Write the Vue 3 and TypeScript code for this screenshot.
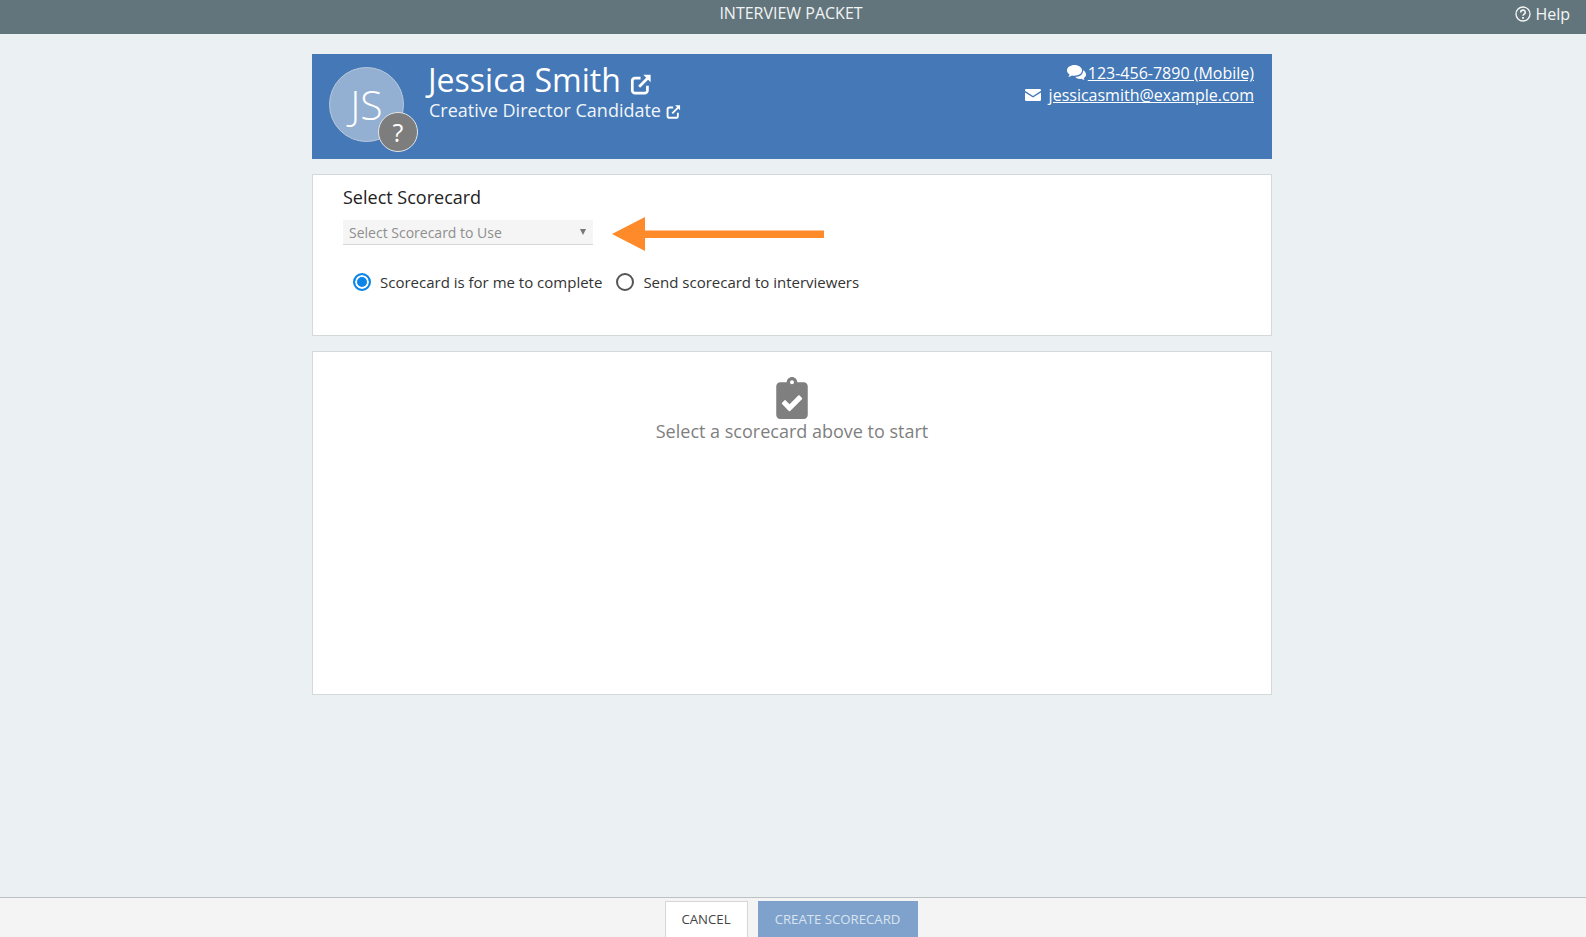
<template>
  <div class="page">
    <header class="topbar">
      <span></span>
      <span class="topbar-title">INTERVIEW PACKET</span>
      <a class="help">
        <svg class="help-icon" viewBox="0 0 24 24" fill="none" stroke="currentColor" stroke-width="2">
          <circle cx="12" cy="12" r="10.5" />
          <path d="M8.6 9.6a3.4 3.4 0 0 1 6.8 0c0 2.4-3.4 2.6-3.4 5" stroke-width="2.4" />
          <path d="M12 16.4v2.6" stroke-width="2.8" />
        </svg>
        Help
      </a>
    </header>

    <main class="content">
      <section class="candidate">
        <div class="avatar">
          JS
          <span class="avatar-badge">?</span>
        </div>
        <div class="candidate-info">
          <h1 class="candidate-name">
            Jessica Smith
            <svg class="ext-icon" viewBox="0 0 24 24">
              <path class="ext-box" d="M11.5 5.5H5.500A3 3 0 0 0 2.500 8.500v10.500a3 3 0 0 0 3 3h10.500a3 3 0 0 0 3-3V14" />
              <path class="ext-shaft" d="M10 15L20 5" />
              <path class="ext-head" d="M14.500 2h8v8z" />
            </svg>
          </h1>
          <p class="candidate-role">
            Creative Director Candidate
            <svg class="ext-icon small" viewBox="0 0 24 24">
              <path class="ext-box" d="M11.5 5.5H5.500A3 3 0 0 0 2.500 8.500v10.500a3 3 0 0 0 3 3h10.500a3 3 0 0 0 3-3V14" />
              <path class="ext-shaft" d="M10 15L20 5" />
              <path class="ext-head" d="M14.500 2h8v8z" />
            </svg>
          </p>
        </div>
        <div class="candidate-contact">
          <div class="contact-row">
            <svg class="contact-icon comments" viewBox="0 0 24 20" fill="currentColor">
              <path d="M9.500 0C4.300 0 0 3 0 6.800c0 2.100 1.300 3.900 3.300 5.200-.3 1-.9 1.900-1.800 2.800 1.800-.2 3.400-.9 4.700-1.800 1 .2 2.100.4 3.300.4 5.200 0 9.500-3 9.500-6.600S14.700 0 9.500 0z" />
              <path d="M20.300 6.300c.1.300.1.600.1.900 0 4.400-4.500 7.700-10 7.900 1.300 1.500 3.500 2.400 6 2.400.8 0 1.500-.1 2.200-.3 1 .9 2.300 1.500 3.700 1.700-.6-.7-1.100-1.500-1.300-2.300 1.800-1 3-2.600 3-4.400 0-2.400-1.600-4.600-3.700-5.900z" />
            </svg>
            <a class="contact-link">123-456-7890 (Mobile)</a>
          </div>
          <div class="contact-row">
            <svg class="contact-icon envelope" viewBox="0 0 24 18" fill="currentColor">
              <path d="M2 0h20a2 2 0 0 1 2 2v.8L12 10.400 0 2.800V2a2 2 0 0 1 2-2z" />
              <path d="M0 5.300l12 7.600 12-7.600V16a2 2 0 0 1-2 2H2a2 2 0 0 1-2-2z" />
            </svg>
            <a class="contact-link">jessicasmith@example.com</a>
          </div>
        </div>
      </section>

      <section class="card select-card">
        <h2 class="select-title">Select Scorecard</h2>
        <div class="select-row">
          <div class="select-box">
            <span>Select Scorecard to Use</span>
            <span class="select-caret"></span>
          </div>
          <svg class="arrow" viewBox="0 0 212 34">
            <path d="M33 0v13.500h179v7.500H33v13L0 17z" />
          </svg>
        </div>
        <div class="radios">
          <label v-for="option in options" :key="option.label" class="radio">
            <span class="radio-mark" :class="{ checked: option.checked }"></span>
            {{ option.label }}
          </label>
        </div>
      </section>

      <section class="card empty-card">
        <svg class="clipboard" viewBox="0 0 384 512" fill="currentColor">
          <path d="M336 64h-80c0-35.300-28.700-64-64-64s-64 28.700-64 64H48C21.500 64 0 85.500 0 112v352c0 26.500 21.500 48 48 48h288c26.500 0 48-21.500 48-48V112c0-26.500-21.500-48-48-48zM192 40c13.300 0 24 10.700 24 24s-10.700 24-24 24-24-10.700-24-24 10.700-24 24-24zm121.200 231.800l-143 141.800c-4.700 4.700-12.300 4.600-17-.1l-82.600-83.300c-4.700-4.700-4.600-12.300.1-17L99.100 285c4.700-4.700 12.300-4.600 17 .1l46 46.400 106-105.200c4.700-4.700 12.300-4.600 17 .1l28.200 28.400c4.700 4.800 4.600 12.300-.1 17z" />
        </svg>
        <p class="empty-text">Select a scorecard above to start</p>
      </section>
    </main>

    <footer class="footer">
      <button class="btn btn-cancel">CANCEL</button>
      <button class="btn btn-create">CREATE SCORECARD</button>
    </footer>
  </div>
</template>

<script setup lang="ts">
const options = [
  { label: 'Scorecard is for me to complete', checked: true },
  { label: 'Send scorecard to interviewers', checked: false }
]
</script>

<style>
html, body {
  margin: 0;
  background: #ebf0f3;
}
</style>

<style scoped>
.page {
  height: 937px;
  display: flex;
  flex-direction: column;
  overflow: hidden;
  font-family: "Open Sans", "Noto Sans", sans-serif;
  background: #ebf0f3;
}

.topbar {
  height: 34px;
  flex: none;
  background: #63757c;
  color: #fff;
  display: grid;
  grid-template-columns: 1fr auto 1fr;
  align-items: start;
  box-sizing: border-box;
  padding: 0 16px 0 12px;
}
.topbar-title {
  font-size: 16px;
  line-height: 26px;
  color: #f2f4f5;
}
.help {
  justify-self: end;
  display: flex;
  align-items: center;
  gap: 4px;
  font-size: 16px;
  line-height: 28px;
  color: #f4f6f6;
}
.help-icon {
  width: 16px;
  height: 16px;
}

.content {
  flex: 1;
  width: 960px;
  margin: 0 auto;
  padding: 20px 2px 0 0;
  display: flex;
  flex-direction: column;
  gap: 15px;
}

.candidate {
  height: 105px;
  background: #4478b6;
  color: #fff;
  display: flex;
  padding: 13px 18px 0 17px;
  box-sizing: border-box;
}
.avatar {
  position: relative;
  width: 75px;
  height: 75px;
  flex: none;
  box-sizing: border-box;
  border-radius: 50%;
  background: #93afd2;
  border: 1px solid #b9c9dd;
  font-size: 41px;
  font-weight: 300;
  line-height: 72px;
  text-align: center;
}
.avatar-badge {
  position: absolute;
  left: 48px;
  top: 44px;
  width: 40px;
  height: 40px;
  box-sizing: border-box;
  border-radius: 50%;
  border: 1px solid #e3e6ea;
  background: #7d7d7d;
  font-size: 25px;
  font-weight: 400;
  line-height: 38px;
}
.candidate-info {
  flex: 1;
  padding-left: 23px;
}
.candidate-name {
  margin: -2px 0 0;
  padding-left: 1px;
  font-size: 32px;
  font-weight: 400;
  line-height: 30px;
  height: 30px;
  display: flex;
  align-items: center;
  gap: 9px;
}
.candidate-role {
  margin: 1px 0 0;
  padding-left: 2px;
  font-size: 18px;
  line-height: 28px;
  display: flex;
  align-items: center;
  gap: 5px;
  color: #f1f5f9;
}
.ext-icon {
  width: 22px;
  height: 22px;
  margin-top: 7px;
  flex: none;
}
.ext-icon.small {
  width: 15px;
  height: 15px;
  margin-top: 3px;
}
.ext-box, .ext-shaft {
  fill: none;
  stroke: #fff;
  stroke-width: 3;
}
.ext-head {
  fill: #fff;
}
.candidate-contact {
  font-size: 16px;
  line-height: 22px;
  display: flex;
  flex-direction: column;
  align-items: flex-end;
  margin-top: -5px;
}
.contact-row {
  display: flex;
  align-items: center;
}
.contact-link {
  text-decoration: underline;
}
.contact-icon.comments {
  width: 19px;
  height: 16px;
  margin-right: 2px;
}
.contact-icon.envelope {
  width: 16px;
  height: 12px;
  margin-right: 8px;
}

.card {
  background: #fff;
  border: 1px solid #d3d8db;
  box-sizing: border-box;
}
.select-card {
  height: 162px;
  padding: 10px 29px 0;
}
.select-title {
  margin: 0;
  padding-left: 1px;
  font-size: 18px;
  font-weight: 400;
  line-height: 25px;
  color: #222;
}
.select-row {
  margin-top: 4px;
  padding-left: 1px;
  display: flex;
  align-items: center;
  gap: 19px;
}
.select-box {
  width: 250px;
  height: 25px;
  box-sizing: border-box;
  background: #f5f5f5;
  border-bottom: 1px solid #d8d8d8;
  padding: 0 7px 0 6px;
  display: flex;
  align-items: center;
  justify-content: space-between;
  font-size: 14px;
  color: #8e8e8e;
}
.select-caret {
  width: 0;
  height: 0;
  border-left: 3px solid transparent;
  border-right: 3px solid transparent;
  border-top: 6px solid #777;
}
.arrow {
  width: 212px;
  height: 34px;
  margin-top: 3px;
  fill: #ff8a2a;
}
.radios {
  margin-top: 21px;
  padding-left: 11px;
  display: flex;
  gap: 14px;
}
.radio {
  display: flex;
  align-items: center;
  gap: 9px;
  font-size: 15px;
  line-height: 20px;
  color: #333;
}
.radio-mark {
  width: 18px;
  height: 18px;
  box-sizing: border-box;
  border-radius: 50%;
  border: 2px solid #555;
  background: #fff;
}
.radio-mark.checked {
  border-color: #0b85e8;
  background: #0b85e8;
  box-shadow: inset 0 0 0 2px #fff;
}

.empty-card {
  height: 344px;
  padding-top: 25px;
  display: flex;
  flex-direction: column;
  align-items: center;
}
.clipboard {
  width: 32px;
  height: 42px;
  color: #7f7f7f;
}
.empty-text {
  margin: 0;
  font-size: 18px;
  line-height: 25px;
  color: #7f7f7f;
}

.footer {
  height: 40px;
  flex: none;
  box-sizing: border-box;
  background: #f4f4f4;
  border-top: 1px solid #bcc1c3;
  padding: 3px 4px 0 0;
  display: flex;
  justify-content: center;
  gap: 10px;
}
.btn {
  height: 36px;
  font-family: inherit;
  font-size: 13.2px;
  padding: 0 0 2px;
  box-sizing: border-box;
  border-radius: 0;
}
.btn-cancel {
  width: 83px;
  background: #fff;
  border: 1px solid #d6d6d6;
  border-bottom: none;
  color: #444;
}
.btn-create {
  width: 160px;
  padding: 0;
  background: #7ea2cb;
  border: none;
  color: #d9e4f0;
}
</style>
